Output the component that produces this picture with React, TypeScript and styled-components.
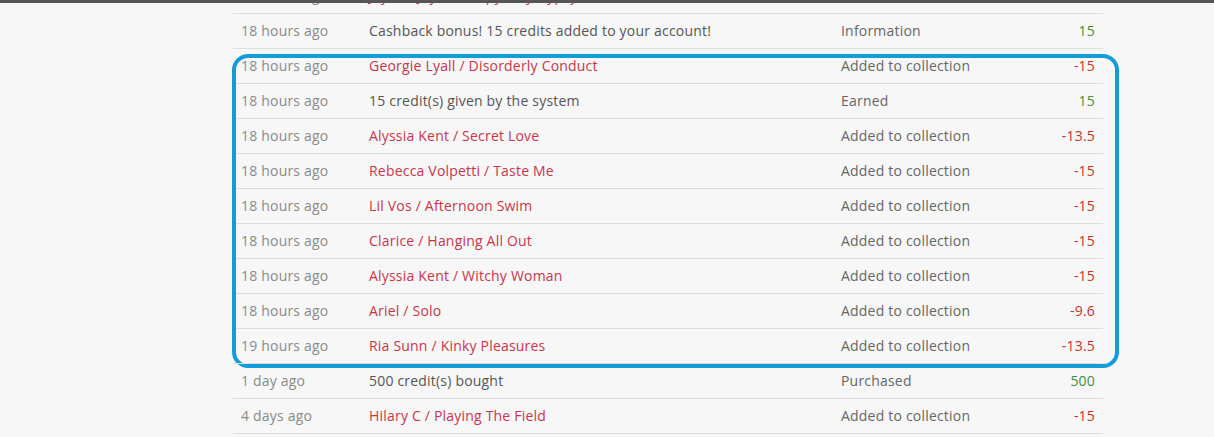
import React from "react";
import styled, { createGlobalStyle } from "styled-components";

const Global = createGlobalStyle`
  html, body { margin: 0; padding: 0; background: #f7f7f7; overflow: hidden; }
  body { font-family: "Open Sans", "Liberation Sans", sans-serif; font-size: 14px; letter-spacing: 0.2px; }
`;

const TopBar = styled.div`
  position: fixed;
  top: 0;
  left: 0;
  right: 0;
  height: 3px;
  background: #555555;
  z-index: 5;
`;

const Page = styled.div`
  padding-left: 233px;
  width: 870px;
  margin-top: -22px;
`;

const Group = styled.div<{ $highlight?: boolean; $last?: boolean }>`
  position: relative;
  ${(p) => p.$last && `border-bottom: 1px solid #dddddd;`}
  ${(p) =>
    p.$highlight &&
    `&::after {
      content: "";
      position: absolute;
      top: 6px;
      left: -1px;
      right: -16px;
      bottom: -5px;
      border: 4px solid #149cd8;
      border-radius: 16px;
      pointer-events: none;
    }`}
`;

const Row = styled.div`
  display: grid;
  grid-template-columns: 128px 472px 1fr 80px;
  height: 35px;
  align-items: center;
  border-top: 1px solid #dddddd;
  padding-bottom: 1px;
  box-sizing: border-box;
`;

const DateCell = styled.div`
  padding-left: 8px;
  color: #8a8a8a;
  white-space: nowrap;
`;

const Desc = styled.div<{ $link?: boolean }>`
  padding-left: 8px;
  color: ${(p) => (p.$link ? "#c8354b" : "#555555")};
  white-space: nowrap;
`;

const Type = styled.div`
  padding-left: 8px;
  color: #666666;
  white-space: nowrap;
`;

const Amount = styled.div<{ $neg?: boolean }>`
  padding-right: 8px;
  text-align: right;
  color: ${(p) => (p.$neg ? "#c9302c" : "#3e8f3e")};
`;

type Item = { date: string; desc: string; link: boolean; type: string; amount: string };

const before: Item[] = [
  { date: "18 hours ago", desc: "Jayden Jaymes / Spy Play Gypsy", link: true, type: "Added to collection", amount: "-15" },
  { date: "18 hours ago", desc: "Cashback bonus! 15 credits added to your account!", link: false, type: "Information", amount: "15" },
];

const highlighted: Item[] = [
  { date: "18 hours ago", desc: "Georgie Lyall / Disorderly Conduct", link: true, type: "Added to collection", amount: "-15" },
  { date: "18 hours ago", desc: "15 credit(s) given by the system", link: false, type: "Earned", amount: "15" },
  { date: "18 hours ago", desc: "Alyssia Kent / Secret Love", link: true, type: "Added to collection", amount: "-13.5" },
  { date: "18 hours ago", desc: "Rebecca Volpetti / Taste Me", link: true, type: "Added to collection", amount: "-15" },
  { date: "18 hours ago", desc: "Lil Vos / Afternoon Swim", link: true, type: "Added to collection", amount: "-15" },
  { date: "18 hours ago", desc: "Clarice / Hanging All Out", link: true, type: "Added to collection", amount: "-15" },
  { date: "18 hours ago", desc: "Alyssia Kent / Witchy Woman", link: true, type: "Added to collection", amount: "-15" },
  { date: "18 hours ago", desc: "Ariel / Solo", link: true, type: "Added to collection", amount: "-9.6" },
  { date: "19 hours ago", desc: "Ria Sunn / Kinky Pleasures", link: true, type: "Added to collection", amount: "-13.5" },
];

const after: Item[] = [
  { date: "1 day ago", desc: "500 credit(s) bought", link: false, type: "Purchased", amount: "500" },
  { date: "4 days ago", desc: "Hilary C / Playing The Field", link: true, type: "Added to collection", amount: "-15" },
];

const Rows = ({ items }: { items: Item[] }) => (
  <>
    {items.map((it, i) => (
      <Row key={i}>
        <DateCell>{it.date}</DateCell>
        <Desc $link={it.link}>{it.desc}</Desc>
        <Type>{it.type}</Type>
        <Amount $neg={it.amount.startsWith("-")}>{it.amount}</Amount>
      </Row>
    ))}
  </>
);

export default function App() {
  return (
    <>
      <Global />
      <TopBar />
      <Page>
        <Group>
          <Rows items={before} />
        </Group>
        <Group $highlight>
          <Rows items={highlighted} />
        </Group>
        <Group $last>
          <Rows items={after} />
        </Group>
      </Page>
    </>
  );
}
